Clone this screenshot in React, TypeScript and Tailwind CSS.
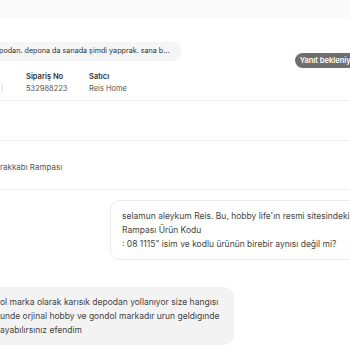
import React from "react";

export default function App() {
  return (
    <div
      className="w-[350px] h-[350px] overflow-hidden bg-white text-[#333]"
      style={{ fontFamily: "Inter, 'Noto Sans', sans-serif" }}
    >
      <div className="h-[18px] bg-[#fafafa]" />
      <div className="h-[83px] border-b border-[#f0f0f0] flex flex-col">
        <div className="flex justify-between items-start pt-[24px]">
          <div className="ml-[-14px] h-[19px] rounded-[8px] bg-[#f5f5f5] pl-[13px] pr-[12px] flex items-center text-[7.2px] text-[#333] whitespace-nowrap">
            podan. depona da sanada şimdi yapprak. sana b...
          </div>
          <div className="mt-[11px] mr-[-14px] h-[15px] rounded-full bg-[#6f6f6f] pl-[5px] pr-[6px] flex items-center text-[7.5px] font-semibold text-white whitespace-nowrap">
            Yanıt bekleniyor
          </div>
        </div>
        <div className="flex mt-[3px] text-[7.5px] leading-[12px]">
          <div className="w-[26px] pl-[1px]">
            <div className="invisible">x</div>
            <div className="text-[#c8c8c8]">l</div>
          </div>
          <div className="w-[63px]">
            <div className="font-semibold text-[#333]">Sipariş No</div>
            <div className="text-[#555]">532988223</div>
          </div>
          <div>
            <div className="font-semibold text-[#333]">Satıcı</div>
            <div className="text-[#555]">Reis Home</div>
          </div>
        </div>
      </div>
      <div className="h-[40px] border-b border-[#f0f0f0]" />
      <div className="h-[49px] border-b border-[#f0f0f0] flex items-center pt-[4px]">
        <div className="text-[8px] text-[#555] whitespace-nowrap">
          rakkabı Rampası
        </div>
      </div>
      <div className="flex pt-[10px]">
        <div className="ml-[110px] mr-[-40px] rounded-[10px] border border-[#ececec] bg-white pl-[11px] pr-[12px] py-[8px] text-[8.5px] leading-[14px] text-[#444] whitespace-nowrap">
          <div>selamun aleykum Reis. Bu, hobby life'ın resmi sitesindeki Ayakkabı</div>
          <div>Rampası Ürün Kodu</div>
          <div>: 08 1115" isim ve kodlu ürünün birebir aynısı değil mi?</div>
        </div>
      </div>
      <div className="flex pt-[27px]">
        <div className="ml-[-14px] rounded-[10px] bg-[#f3f3f3] pl-[14px] pr-[15px] py-[8px] text-[8.5px] leading-[14px] text-[#444] whitespace-nowrap">
          <div>ol marka olarak karısık depodan yollanıyor size hangısı</div>
          <div>unde orjinal hobby ve gondol markadır urun geldıgınde</div>
          <div>ayabılırsınız efendim</div>
        </div>
      </div>
    </div>
  );
}
